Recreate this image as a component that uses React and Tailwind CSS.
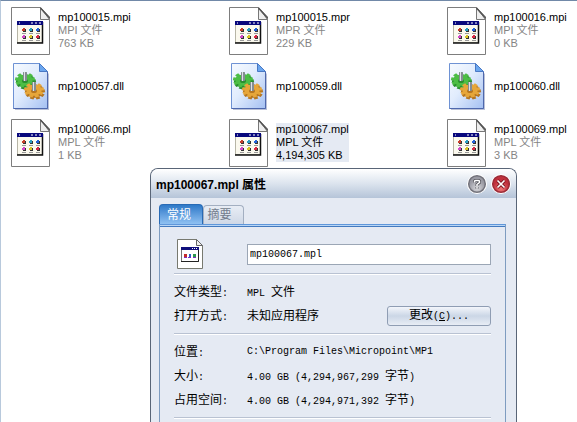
const FILES = [
  { name: 'mp100015.mpi', type: 'MPI 文件', size: '763 KB' },
  { name: 'mp100015.mpr', type: 'MPR 文件', size: '229 KB' },
  { name: 'mp100016.mpi', type: 'MPI 文件', size: '0 KB' },
  { name: 'mp100057.dll', dll: true },
  { name: 'mp100059.dll', dll: true },
  { name: 'mp100060.dll', dll: true },
  { name: 'mp100066.mpl', type: 'MPL 文件', size: '1 KB' },
  { name: 'mp100067.mpl', type: 'MPL 文件', size: '4,194,305 KB', selected: true },
  { name: 'mp100069.mpl', type: 'MPL 文件', size: '3 KB' },
];

const DOTS = [
  [11, 22, '#c9402c'], [18, 22, '#2d9fc4'], [25, 22, '#2563d9'],
  [11, 29, '#d34bc8'], [18, 29, '#d9c52a'], [25, 29, '#d92a45'],
];

function DocIcon() {
  return (
    <svg className="h-12 w-10 shrink-0" viewBox="0 0 40 48" aria-hidden="true">
      <path d="M.5 .5H29.5L38.5 10V47.5H.5Z" fill="#fff" stroke="#7d7d7d" />
      <path d="M29.5 .5V12.5H38.5Z" fill="#eee" stroke="#777" />
      <path d="M29.5 1L38.5 11" stroke="#555" strokeWidth="1.5" />
      <rect x="6.5" y="14.500" width="25" height="21" fill="#fbf9ee" stroke="#b7b5a6" />
      <path d="M31.500 15V36H6" fill="none" stroke="#111" strokeWidth="1.500" />
      <rect x="6" y="14" width="26" height="4" fill="#08087c" />
      <path d="M8 16h1M20 16h2M24 16h2M28 16h2" stroke="#fff" />
      {DOTS.map(([x, y, color]) => (
        <g key={`${x}-${y}`}>
          <rect x={x + 1} y={y} width="3" height="3" fill="#333" />
          <rect x={x} y={y - 1} width="3" height="3" fill={color} />
          <rect x={x} y={y - 1} width="1" height="1" fill="#fff" />
          <path d={`M${x} ${y + 4.5}h4`} stroke="#999" />
        </g>
      ))}
    </svg>
  );
}

const TEETH = [0, 40, 80, 120, 160, 200, 240, 280, 320];

function GearShape({ color }) {
  return (
    <g fill={color}>
      {TEETH.map((a) => (
        <rect key={a} x="-2" y="-10" width="4" height="6" transform={`rotate(${a})`} />
      ))}
      <circle r="7.500" />
    </g>
  );
}

function Gear({ x, y, fill, shade }) {
  return (
    <g transform={`translate(${x} ${y})`}>
      <g transform="translate(1 2) scale(1 .75)"><GearShape color={shade} /></g>
      <g transform="scale(1 .75)"><GearShape color={fill} /></g>
      <ellipse cy="1" rx="3" ry="2" fill={shade} />
      <rect x="-2" y="-8" width="4" height="9" rx="1" fill="#848c93" />
      <rect x="-1" y="-8" width="1" height="9" fill="#dde2e6" />
    </g>
  );
}

function DllIcon() {
  return (
    <svg className="h-12 w-10 shrink-0" viewBox="0 0 40 48" aria-hidden="true">
      <defs>
        <linearGradient id="dllPage" x1="0" y1="0" x2="1" y2="1">
          <stop offset="0" stopColor="#f6faff" />
          <stop offset=".45" stopColor="#e1ecfd" />
          <stop offset="1" stopColor="#a4c0f2" />
        </linearGradient>
      </defs>
      <path d="M4 3H30L38 11V47H4Z" fill="#8c98bd" opacity=".6" />
      <path d="M2.5 .5H28.500L36.500 8.500V45.500H2.500Z" fill="url(#dllPage)" stroke="#6e92d4" />
      <path d="M2.5 45.500H36.500V9" fill="none" stroke="#4e68ad" />
      <path d="M28.500 .5V8.500H36.500Z" fill="#6ba6ee" stroke="#4978c4" />
      <Gear x={14} y={17} fill="#4cbd45" shade="#2a8f30" />
      <Gear x={23} y={27} fill="#e6a63a" shade="#b57622" />
    </svg>
  );
}

function FileItem({ file }) {
  return (
    <li className="flex h-12 items-center gap-2">
      {file.dll ? <DllIcon /> : <DocIcon />}
      <div className={`mb-[2px] -ml-px whitespace-nowrap ${file.selected ? 'bg-[#e5eaf3] text-black' : 'text-[#858585]'}`}>
        <p className="text-black">{file.name}</p>
        {file.type && <p>{file.type}</p>}
        {file.size && <p>{file.size}</p>}
      </div>
    </li>
  );
}

function SmallDocIcon() {
  return (
    <svg className="ml-[2px] h-8 w-7 shrink-0" viewBox="0 0 28 32" aria-hidden="true">
      <path d="M1.5 1.5H20.500L26.500 7.500V30.500H1.500Z" fill="#fff" stroke="#77796f" />
      <path d="M20.500 1.500V7.500H26.500Z" fill="#eee" stroke="#666" />
      <rect x="5.500" y="9.500" width="17" height="14" fill="#fff" stroke="#777" />
      <path d="M22.500 10V23.500H5" fill="none" stroke="#222" />
      <rect x="5" y="9" width="18" height="3" fill="#10107c" />
      <path d="M16 10.500h1M18 10.500h1M20 10.500h1" stroke="#fff" />
      <rect x="8" y="16" width="3" height="3" fill="#c62b2b" />
      <rect x="13" y="16" width="2" height="3" fill="#2b5ec6" />
      <rect x="17" y="16" width="3" height="3" fill="#2a9950" />
      <path d="M8 19.500h3M12 19.500h3M17 19.500h3" stroke="#7d2bc0" />
    </svg>
  );
}

function Latin({ children }) {
  return <span className="font-['Liberation_Mono','Noto_Sans_CJK_SC',monospace] text-[10px]">{children}</span>;
}

function Row({ label, children }) {
  return (
    <div className="flex h-6 items-center">
      <dt className="w-[73px] shrink-0">{label}<Latin>:</Latin></dt>
      <dd className="flex flex-1 items-center justify-between whitespace-pre">{children}</dd>
    </div>
  );
}

function Rule() {
  return <hr className="h-[2px] border-0 border-t border-[#b9c2d2] bg-white" />;
}

function PropertiesDialog() {
  return (
    <section
      role="dialog"
      aria-labelledby="dialog-title"
      className="absolute top-[167px] bottom-0 left-[149px] w-[367px] overflow-hidden rounded-t-lg border border-b-0 border-[#596577] bg-[#e5eaf3] text-xs text-black"
    >
      <header className="flex h-[29px] items-center justify-between bg-linear-to-b from-white via-[#dce4ee] to-[#b5c4d8] pr-[5px] pl-[5px]">
        <h1 id="dialog-title" className="pt-[2px] font-['Liberation_Sans','Noto_Sans_CJK_SC',sans-serif] font-bold">mp100067.mpl 属性</h1>
        <div className="flex gap-1">
          <button type="button" aria-label="Help" className="size-5">
            <svg viewBox="0 0 20 20" aria-hidden="true">
              <defs>
                <radialGradient id="helpFill" cy=".75"><stop offset="0" stopColor="#d8d8dc" /><stop offset="1" stopColor="#9a9aa3" /></radialGradient>
              </defs>
              <circle cx="10" cy="10" r="10" fill="#fff" />
              <circle cx="10" cy="10" r="8.300" fill="url(#helpFill)" stroke="#73737c" strokeWidth="1.5" />
              <path d="M7.500 8.500V7.500q0-1 1-1h3q1 0 1 1v1L10 10.500V12M10 13v1.700" fill="none" stroke="#55555c" strokeWidth="3" />
              <path d="M7.500 8.500V7.500q0-1 1-1h3q1 0 1 1v1L10 10.500V12M10 13v1.700" fill="none" stroke="#fff" strokeWidth="1.5" />
            </svg>
          </button>
          <button type="button" aria-label="Close" className="size-5">
            <svg viewBox="0 0 20 20" aria-hidden="true">
              <defs>
                <radialGradient id="closeFill" cy=".8"><stop offset="0" stopColor="#ef7777" /><stop offset="1" stopColor="#c0303c" /></radialGradient>
              </defs>
              <circle cx="10" cy="10" r="10" fill="#fff" />
              <circle cx="10" cy="10" r="8.300" fill="url(#closeFill)" stroke="#9c2c38" strokeWidth="1.5" />
              <path d="M6.500 6.500l7 7M13.500 6.500l-7 7" stroke="#7d1520" strokeWidth="3.2" />
              <path d="M6.500 6.500l7 7M13.500 6.500l-7 7" stroke="#fff" strokeWidth="1.600" />
            </svg>
          </button>
        </div>
      </header>
      <div className="pt-[6px] pr-[10px] pl-2">
        <div role="tablist" className="flex h-5 items-end">
          <button type="button" role="tab" aria-selected="true" className="h-5 w-11 rounded-t border border-b-0 border-[#286ab5] bg-linear-to-b from-[#2d79c8] to-[#8fc1f2] pr-1 leading-4 text-white">常规</button>
          <button type="button" role="tab" aria-selected="false" className="h-[19px] w-[41px] rounded-t border border-b-0 border-[#a3afc1] bg-linear-to-b from-[#e8edf5] to-[#cfd8e6] pr-2 leading-4 text-[#737d8d]">摘要</button>
        </div>
        <div role="tabpanel" className="h-60 border-x border-t border-[#7e9cc0] border-t-[#5f97da] px-[14px]">
          <div className="-mx-[14px] h-[2px] border-b border-[#437abf] bg-[#b9d6f5]" />
          <div className="flex h-9 items-center pt-[2px] mt-2">
            <div className="w-[73px] shrink-0"><SmallDocIcon /></div>
            <input aria-label="文件名" defaultValue="mp100067.mpl" className="h-[21px] min-w-0 flex-1 border border-[#9ba6b5] bg-white px-[2px] font-['Liberation_Mono',monospace] text-[10px]" />
          </div>
          <div className="pt-[2px] pb-[5px]"><Rule /></div>
          <dl>
            <Row label="文件类型"><span><Latin>MPL </Latin>文件</span></Row>
            <Row label="打开方式">
              未知应用程序
              <button type="button" className="h-5 w-[104px] rounded-[3px] border border-[#8f9db3] bg-linear-to-b from-[#f3f6fb] via-[#cbd6e6] to-[#e8edf5] leading-4">更改<Latin>(<u>C</u>)...</Latin></button>
            </Row>
          </dl>
          <div className="py-[5px]"><Rule /></div>
          <dl>
            <Row label="位置"><Latin>C:\Program Files\Micropoint\MP1</Latin></Row>
            <Row label="大小"><span><Latin>4.00 GB (4,294,967,299 </Latin>字节<Latin>)</Latin></span></Row>
            <Row label="占用空间"><span><Latin>4.00 GB (4,294,971,392 </Latin>字节<Latin>)</Latin></span></Row>
          </dl>
          <div className="pt-[5px]"><Rule /></div>
        </div>
      </div>
    </section>
  );
}

export default function App() {
  return (
    <main className="relative h-screen overflow-hidden border-t border-l border-t-[#7189a8] border-l-[#b8c9dc] bg-white font-['Liberation_Sans','Noto_Sans_CJK_SC',sans-serif] text-[11px] leading-[13px]">
      <ul className="grid grid-cols-[repeat(3,218px)] gap-y-2 pt-[6px] pl-[10px]">
        {FILES.map((file) => <FileItem key={file.name} file={file} />)}
      </ul>
      <PropertiesDialog />
    </main>
  );
}
